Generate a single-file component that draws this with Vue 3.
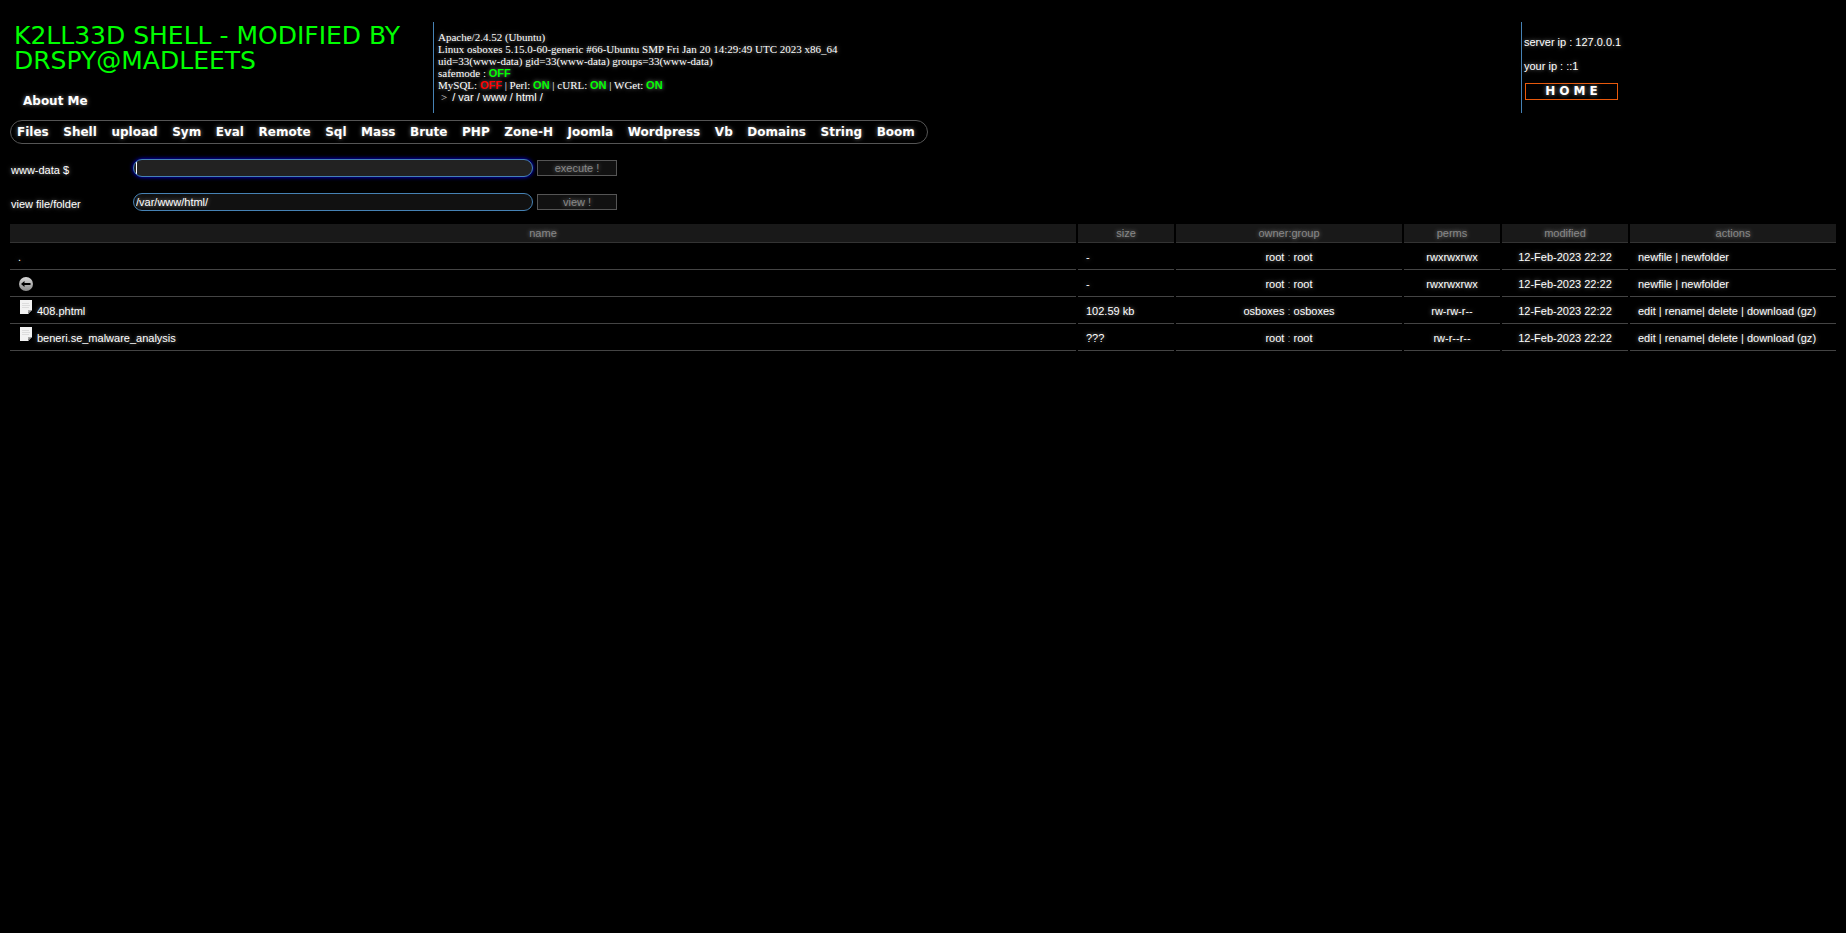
<script setup>
import { ref } from 'vue'

const menu = ['Files', 'Shell', 'upload', 'Sym', 'Eval', 'Remote', 'Sql', 'Mass', 'Brute', 'PHP', 'Zone-H', 'Joomla', 'Wordpress', 'Vb', 'Domains', 'String', 'Boom']
const crumbs = ['var', 'www', 'html']
const command = ref('')
const path = ref('/var/www/html/')

const files = [
  { kind: 'here', name: '.', size: '-', owner: 'root', group: 'root', perms: 'rwxrwxrwx', modified: '12-Feb-2023 22:22' },
  { kind: 'up', name: '', size: '-', owner: 'root', group: 'root', perms: 'rwxrwxrwx', modified: '12-Feb-2023 22:22' },
  { kind: 'file', name: '408.phtml', size: '102.59 kb', owner: 'osboxes', group: 'osboxes', perms: 'rw-rw-r--', modified: '12-Feb-2023 22:22' },
  { kind: 'file', name: 'beneri.se_malware_analysis', size: '???', owner: 'root', group: 'root', perms: 'rw-r--r--', modified: '12-Feb-2023 22:22' }
]
</script>

<template>
  <div class="page">
    <header class="top">
      <div class="brand">
        <h1>K2LL33D SHELL - MODIFIED BY DRSPY@MADLEETS</h1>
        <a class="about" href="#">About Me</a>
      </div>
      <div class="info">
        <div>Apache/2.4.52 (Ubuntu)</div>
        <div>Linux osboxes 5.15.0-60-generic #66-Ubuntu SMP Fri Jan 20 14:29:49 UTC 2023 x86_64</div>
        <div>uid=33(www-data) gid=33(www-data) groups=33(www-data)</div>
        <div>safemode : <b class="on">OFF</b></div>
        <div>MySQL: <b class="off">OFF</b> | Perl: <b class="on">ON</b> | cURL: <b class="on">ON</b> | WGet: <b class="on">ON</b></div>
        <div class="crumbs"><span class="arrow">&gt;</span><a href="#">/ </a><a v-for="c in crumbs" :key="c" href="#">{{ c }} / </a></div>
      </div>
      <div class="net">
        <div>server ip : 127.0.0.1</div>
        <div>your ip : ::1</div>
        <a class="home" href="#">HOME</a>
      </div>
    </header>

    <nav class="menu">
      <a v-for="m in menu" :key="m" href="#">{{ m }}</a>
    </nav>

    <form class="line" @submit.prevent>
      <label for="cmd">www-data $</label>
      <input id="cmd" v-model="command" class="active" type="text" autocomplete="off">
      <button type="submit">execute !</button>
    </form>
    <form class="line" @submit.prevent>
      <label for="path">view file/folder</label>
      <input id="path" v-model="path" type="text">
      <button type="submit">view !</button>
    </form>

    <table class="files">
      <thead>
        <tr>
          <th>name</th>
          <th class="w-size">size</th>
          <th class="w-owner">owner:group</th>
          <th class="w-size">perms</th>
          <th class="w-mod">modified</th>
          <th class="w-act">actions</th>
        </tr>
      </thead>
      <tbody>
        <tr v-for="(f, i) in files" :key="i">
          <td>
            <a v-if="f.kind === 'up'" class="name" href="#" aria-label="Parent folder">
              <svg width="16" height="16" viewBox="0 0 16 16" class="up">
                <defs>
                  <linearGradient id="disc" x1="0" y1="0" x2="0" y2="1">
                    <stop offset="0" stop-color="#d8d8d8" />
                    <stop offset="1" stop-color="#8c8c8c" />
                  </linearGradient>
                </defs>
                <circle cx="8" cy="8" r="7" fill="url(#disc)" />
                <path d="M3 8 L6.5 5 V7 H12.5 V9 H6.5 V11 Z" fill="#000" />
              </svg>
            </a>
            <a v-else class="name" href="#">
              <svg v-if="f.kind === 'file'" width="14" height="16" viewBox="0 0 14 16" class="doc">
                <path d="M1 1 H13 V11 L9 15 H1 Z" fill="#f2f2f2" />
                <path d="M9 15 V11 H13 Z" fill="#a8a8a8" />
                <path d="M9.5 14 L12 11.5" fill="none" stroke="#444" stroke-width="1" stroke-dasharray="1 1" />
                <path d="M3 4.5 H10 M3 6.5 H11 M3 8.5 H10" stroke="#dcdcdc" stroke-width="1" />
              </svg>
              <span>{{ f.name }}</span>
            </a>
          </td>
          <td>{{ f.size }}</td>
          <td class="mid">{{ f.owner }} <span class="colon">:</span> {{ f.group }}</td>
          <td class="mid">{{ f.perms }}</td>
          <td class="mid">{{ f.modified }}</td>
          <td v-if="f.kind === 'file'"><a href="#">edit</a> | <a href="#">rename</a>| <a href="#">delete</a> | <a href="#">download</a> (<a href="#">gz</a>)</td>
          <td v-else><a href="#">newfile</a> | <a href="#">newfolder</a></td>
        </tr>
      </tbody>
    </table>
  </div>
</template>

<style>
html,
body {
  background: #000;
}
</style>

<style scoped>
.page {
  padding: 22px 10px 0;
  color: #fff;
  font: 11px/12px "Liberation Sans", Arial, sans-serif;
  text-shadow: 0 0 4px #888;
}

a {
  color: inherit;
  text-decoration: none;
}

.top {
  display: grid;
  grid-template-columns: 423fr 1088fr 315fr;
  min-height: 91px;
}

.brand {
  padding-left: 4px;
}

h1 {
  margin: 1px 0 0;
  color: #0f0;
  font: 25px/25px "DejaVu Sans", sans-serif;
  text-shadow: none;
}

.about {
  display: inline-block;
  margin: 20px 0 0 9px;
  font: bold 12px/16px "DejaVu Sans", sans-serif;
}

.info,
.net {
  border-left: 1px solid #4682b4;
}

.info {
  padding: 9px 4px 0;
  font-family: "Liberation Serif", "Times New Roman", serif;
}

.info b,
.crumbs a {
  font-family: "Liberation Sans", Arial, sans-serif;
}

.info div {
  height: 12px;
  white-space: pre;
}

.on {
  color: #0f0;
}

.off {
  color: #f00;
}

.arrow {
  margin: 0 5px 0 3px;
  color: #ddd;
}

.net {
  padding: 14px 3px 0 2px;
}

.net div {
  margin-bottom: 12px;
}

.home {
  display: block;
  box-sizing: border-box;
  width: 93px;
  margin: -1px 0 0 1px;
  padding-left: 4px;
  border: 1px solid #e8590c;
  font: bold 12px/15px "DejaVu Sans", sans-serif;
  letter-spacing: 4px;
  text-align: center;
}

.menu {
  display: flex;
  justify-content: space-between;
  box-sizing: border-box;
  width: 918px;
  max-width: 100%;
  margin: 7px 0 15px;
  padding: 0 12px 0 6px;
  border: 1px solid #555;
  border-radius: 12px;
  font: bold 12px/22px "DejaVu Sans", sans-serif;
}

.line {
  display: flex;
  align-items: center;
  height: 18px;
  margin-bottom: 16px;
}

.line label {
  width: 122px;
  padding: 4px 0 0 1px;
  box-sizing: border-box;
}

.line input {
  box-sizing: border-box;
  width: 400px;
  height: 18px;
  margin: 0 4px 0 1px;
  padding: 0 2px;
  border: 1px solid #4682b4;
  border-radius: 9px;
  outline: none;
  background: #111;
  color: #fff;
  font: inherit;
  text-shadow: inherit;
}

.line input.active {
  background: linear-gradient(#fff, #fff) 2px 2px / 1px 12px no-repeat #222;
  box-shadow: 0 0 4px #00f;
  caret-color: transparent;
}

.line button {
  box-sizing: border-box;
  width: 80px;
  height: 16px;
  padding: 0;
  border: 1px solid #555;
  background: #111;
  color: #888;
  font: inherit;
  text-shadow: inherit;
}

.files {
  width: calc(100% + 4px);
  margin: -3px -2px 0;
  border-spacing: 2px 0;
  border-collapse: separate;
  table-layout: fixed;
}

th {
  height: 19px;
  padding: 0;
  box-sizing: border-box;
  border-bottom: 1px solid #333;
  background: #191919;
  color: #888;
  font-weight: normal;
}

td {
  box-sizing: border-box;
  height: 27px;
  padding: 1px 8px 0;
  border-bottom: 1px solid #444;
  white-space: nowrap;
}

.mid {
  text-align: center;
}

.colon {
  color: #888;
}

.w-size {
  width: 96px;
}

.w-owner {
  width: 226px;
}

.w-mod {
  width: 126px;
}

.w-act {
  width: 206px;
}

.name {
  display: flex;
  align-items: center;
}

.doc {
  margin: -8px 4px 0 1px;
}
</style>
